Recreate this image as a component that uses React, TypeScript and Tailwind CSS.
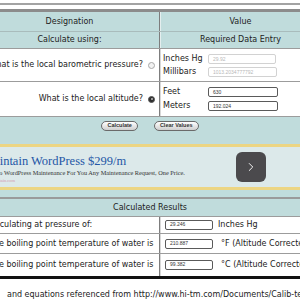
import { ChevronRight } from "lucide-react";

const font = "font-['DejaVu_Sans',Verdana,sans-serif]";

function Radio({ checked }: { checked?: boolean }) {
  if (checked) {
    return (
      <span className="w-[7px] h-[7px] rounded-full bg-[#2e2e2e] border border-[#555] flex items-center justify-center flex-shrink-0">
        <span className="w-[2px] h-[2px] rounded-full bg-[#bdbdbd]" />
      </span>
    );
  }
  return <span className="w-[7px] h-[7px] rounded-full bg-[#f2f2f2] border border-[#a8a8a8] flex-shrink-0" />;
}

function Field({ value, disabled, w = "w-[68px]" }: { value: string; disabled?: boolean; w?: string }) {
  return (
    <div
      className={`${w} h-[10px] rounded-[2px] border flex items-center px-[4px] text-[5px] font-['Liberation_Sans',Arial,sans-serif] ${
        disabled ? "border-[#d2d2d2] text-[#b8b8b8] bg-white" : "border-[#5a5a5a] text-[#333] bg-white"
      }`}
    >
      {value}
    </div>
  );
}

function Btn({ label }: { label: string }) {
  return (
    <button className="h-[10px] px-[5px] rounded-full border border-[#6a6a6a] bg-gradient-to-b from-white to-[#cfcfcf] text-[5.5px] font-bold text-[#333] leading-none font-['Liberation_Sans',Arial,sans-serif]">
      {label}
    </button>
  );
}

export default function App() {
  return (
    <div className={`w-[300px] h-[300px] overflow-hidden bg-white text-[8px] text-[#222] ${font}`}>
      <div className="ml-[-20px] w-[340px]">
        <div className="mt-[3px] h-[2px] bg-[#a3a3a3]" />
        <div className="h-[4px]" />

        {/* input table */}
        <div className="border-t-[3px] border-[#8c8c8c] border-b-2 border-b-[#9a9a9a]">
          <div className="flex h-[20px] bg-[#c0dcdc] border-b border-[#a9bcbc]">
            <div className="w-[180px] border-r border-[#7d7d7d] flex items-center justify-center">Designation</div>
            <div className="flex-1 border-l border-[#e4eeee] flex items-center justify-center">Value</div>
          </div>
          <div className="flex h-[17px] bg-[#c0dcdc] border-b border-[#9c9c9c]">
            <div className="w-[180px] border-r border-[#7d7d7d] flex items-center justify-center">Calculate using:</div>
            <div className="flex-1 border-l border-[#e4eeee] flex items-center justify-center">Required Data Entry</div>
          </div>
          <div className="flex h-[33px] bg-white border-b border-[#9c9c9c]">
            <div className="w-[180px] border-r border-[#7d7d7d] flex items-center justify-end gap-[5px] pr-[4px] whitespace-nowrap">
              What is the local barometric pressure?
              <Radio />
            </div>
            <div className="flex-1 border-l border-[#d8d8d8] pl-[2px] flex flex-col justify-center gap-[3px] leading-[10px]">
              <div className="flex items-center">
                <span className="w-[45px]">Inches Hg</span>
                <Field value="29.92" disabled />
              </div>
              <div className="flex items-center">
                <span className="w-[45px]">Millibars</span>
                <Field value="1013.2034777792" disabled w="w-[69px]" />
              </div>
            </div>
          </div>
          <div className="flex h-[35px] bg-white border-b border-[#9c9c9c]">
            <div className="w-[180px] border-r border-[#7d7d7d] flex items-center justify-end gap-[5px] pr-[4px] whitespace-nowrap">
              What is the local altitude?
              <Radio checked />
            </div>
            <div className="flex-1 border-l border-[#d8d8d8] pl-[2px] flex flex-col justify-center gap-[4px] leading-[10px]">
              <div className="flex items-center">
                <span className="w-[45px]">Feet</span>
                <Field value="630" w="w-[70px]" />
              </div>
              <div className="flex items-center">
                <span className="w-[45px]">Meters</span>
                <Field value="192.024" w="w-[70px]" />
              </div>
            </div>
          </div>
          <div className="bg-[#c0dcdc] pt-[4px] pb-[7px]">
            <div className="flex justify-center gap-[16px] h-[10px]">
              <Btn label="Calculate" />
              <Btn label="Clear Values" />
            </div>
            <div className="mt-[13px] border-y-[3px] border-[#ecd583] bg-[#dce9ea] h-[46px] flex items-center pl-[3px] pr-[54px] font-['Liberation_Serif',Georgia,serif]">
              <div className="flex-1 flex flex-col leading-none pt-[4px]">
                <span className="text-[12.5px] text-[#2457a6]">Maintain WordPress $299/m</span>
                <span className="mt-[3px] ml-[2px] text-[6.3px] text-[#333] whitespace-nowrap">
                  We Do WordPress Maintenance For You Any Maintenance Request, One Price.
                </span>
                <span className="mt-[2px] ml-[2px] text-[4.5px] text-[#d49aaf]">wpmaintain.com</span>
              </div>
              <div className="w-[30px] h-[30px] rounded-[6px] bg-[#4b4a4d] flex items-center justify-center">
                <ChevronRight className="w-[14px] h-[14px] text-white" strokeWidth={1.6} />
              </div>
            </div>
          </div>
        </div>

        {/* results table */}
        <div className="border-b-[3px] border-[#111]">
          <div className="h-[18px] bg-[#c0dcdc] border-b border-[#9c9c9c] flex items-center justify-center">
            Calculated Results
          </div>
          <div className="flex h-[17px] border-b border-[#9c9c9c]">
            <div className="w-[180px] border-r border-[#7d7d7d] pl-[7px] flex items-center whitespace-nowrap">
              Calculating at pressure of:
            </div>
            <div className="flex-1 border-l border-[#d8d8d8] pl-[4px] flex items-center whitespace-nowrap">
              <Field value="29.246" w="w-[48px]" />
              <span className="ml-[5px]">Inches Hg</span>
            </div>
          </div>
          <div className="flex h-[20px] border-b border-[#9c9c9c]">
            <div className="w-[180px] border-r border-[#7d7d7d] pl-[9px] flex items-center whitespace-nowrap">
              The boiling point temperature of water is
            </div>
            <div className="flex-1 border-l border-[#d8d8d8] pl-[4px] flex items-center whitespace-nowrap">
              <Field value="210.887" w="w-[48px]" />
              <span className="ml-[8px]">°F (Altitude Corrected)</span>
            </div>
          </div>
          <div className="flex h-[22px]">
            <div className="w-[180px] border-r border-[#7d7d7d] pl-[9px] flex items-center whitespace-nowrap">
              The boiling point temperature of water is
            </div>
            <div className="flex-1 border-l border-[#d8d8d8] pl-[4px] flex items-center whitespace-nowrap">
              <Field value="99.382" w="w-[48px]" />
              <span className="ml-[8px]">°C (Altitude Corrected)</span>
            </div>
          </div>
        </div>

        <p className="mt-[11px] pl-[27px] leading-[10px] whitespace-nowrap">
          and equations referenced from http://www.hi-tm.com/Documents/Calib-temp.html
        </p>
      </div>
    </div>
  );
}
